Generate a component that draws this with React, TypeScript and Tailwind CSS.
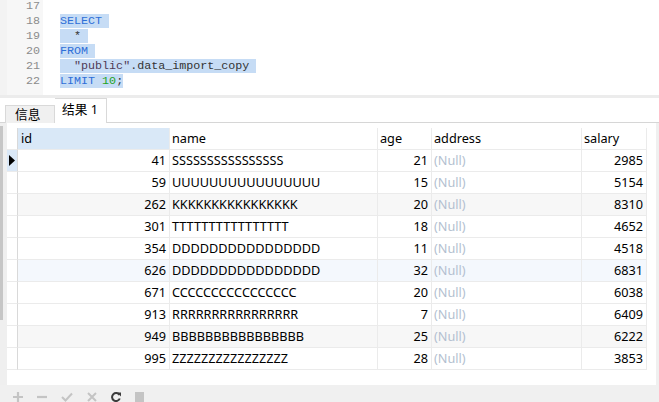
import React from 'react';

interface Row {
  id: number;
  name: string;
  age: number;
  salary: number;
}

const rows: Row[] = [
  { id: 41, name: 'SSSSSSSSSSSSSSSS', age: 21, salary: 2985 },
  { id: 59, name: 'UUUUUUUUUUUUUUUU', age: 15, salary: 5154 },
  { id: 262, name: 'KKKKKKKKKKKKKKKK', age: 20, salary: 8310 },
  { id: 301, name: 'TTTTTTTTTTTTTTTT', age: 18, salary: 4652 },
  { id: 354, name: 'DDDDDDDDDDDDDDDD', age: 11, salary: 4518 },
  { id: 626, name: 'DDDDDDDDDDDDDDDD', age: 32, salary: 6831 },
  { id: 671, name: 'CCCCCCCCCCCCCCCC', age: 20, salary: 6038 },
  { id: 913, name: 'RRRRRRRRRRRRRRRR', age: 7, salary: 6409 },
  { id: 949, name: 'BBBBBBBBBBBBBBBB', age: 25, salary: 6222 },
  { id: 995, name: 'ZZZZZZZZZZZZZZZZ', age: 28, salary: 3853 },
];

const rowBg = (i: number) => {
  if (i === 2 || i === 8) return 'bg-[#f7f7f7]';
  if (i === 5) return 'bg-[#f4f8fd]';
  return 'bg-white';
};

const cell = 'h-[22px] border-r border-b border-[#ebebeb] flex items-center';

export default function App() {
  return (
    <div className="w-[659px] h-[402px] overflow-hidden bg-[#f0f0f0] flex flex-col text-[12.7px] text-black font-['Noto_Sans','Noto_Sans_CJK_SC',sans-serif]">
      {/* SQL editor */}
      <div className="h-[95px] bg-white flex overflow-hidden">
        <div className="w-[7px] bg-[#f3f3f3]" />
        <div className="w-[36px] bg-[#f7f7f7] flex flex-col items-end pr-[3px] mt-[-1px] text-[#8c8c8c] font-['Liberation_Mono',monospace] text-[11.7px] leading-[15px]">
          {[17, 18, 19, 20, 21, 22].map((n) => (
            <span key={n}>{n}</span>
          ))}
        </div>
        <div className="pl-[17px] mt-[-1px] flex flex-col font-['Liberation_Mono',monospace] text-[11.7px] leading-[15px] whitespace-pre text-[#333]">
          <div className="h-[15px]" />
          <div className="h-[15px]"><span className="bg-[#c6dcf5] text-[#2e6fd8]">SELECT </span></div>
          <div className="h-[15px]"><span className="bg-[#c6dcf5]">{'  * '}</span></div>
          <div className="h-[15px]"><span className="bg-[#c6dcf5] text-[#2e6fd8]">FROM </span></div>
          <div className="h-[15px]">
            <span className="bg-[#c6dcf5]">
              {'  '}<span className="text-[#4f3a55]">"public"</span>.data_import_copy{' '}
            </span>
          </div>
          <div className="h-[15px]">
            <span className="bg-[#c6dcf5]">
              <span className="text-[#2e6fd8]">LIMIT </span><span className="text-[#1fa31f]">10</span>;
            </span>
          </div>
        </div>
      </div>

      <div className="h-[3px] bg-[#ececec]" />

      {/* Tabs */}
      <div className="h-[25px] bg-white flex items-end border-b border-[#d6d6d6] pl-[5px]">
        <div className="h-[18px] w-[50px] bg-[#f0f0f0] border border-b-0 border-[#d9d9d9] flex items-center pl-[9px] mb-[-1px]">
          信息
        </div>
        <div className="h-[25px] w-[52px] bg-white border border-l-0 border-b-0 border-[#d9d9d9] flex items-center pl-[7px] pb-[2px] mb-[-1px]">
          结果 1
        </div>
      </div>

      {/* Grid */}
      <div className="flex-1 flex">
        <div className="w-[7px] bg-[#efefef] pt-[3px]">
          <div className="w-[3px] h-[194px] bg-[#c6c6c6]" />
        </div>
        <div className="flex-1 bg-white pt-[5px]">
          <div className="grid grid-cols-[11px_152px_208px_54px_150px_65px]">
            <div className={`${cell} border-r-[#d9d9d9] bg-white`} />
            <div className={`${cell} bg-[#d9e8f7] pl-[3px]`}>id</div>
            <div className={`${cell} pl-[2px]`}>name</div>
            <div className={`${cell} pl-[2px]`}>age</div>
            <div className={`${cell} pl-[2px]`}>address</div>
            <div className={`${cell} pl-[2px]`}>salary</div>
            {rows.map((r, i) => (
              <React.Fragment key={r.id}>
                <div className={`${cell} border-r-[#d9d9d9] ${i === 0 ? 'bg-[#dae8f7]' : 'bg-white'} justify-center`}>
                  {i === 0 && (
                    <svg width="7" height="11" viewBox="0 0 7 11">
                      <path d="M0 0 L6 5.5 L0 11 Z" fill="#000" />
                    </svg>
                  )}
                </div>
                <div className={`${cell} ${rowBg(i)} justify-end pr-[3px]`}>{r.id}</div>
                <div className={`${cell} ${rowBg(i)} pl-[2px]`}>{r.name}</div>
                <div className={`${cell} ${rowBg(i)} justify-end pr-[3px]`}>{r.age}</div>
                <div className={`${cell} ${rowBg(i)} pl-[2px] text-[#b3bfd0]`}>(Null)</div>
                <div className={`${cell} ${rowBg(i)} justify-end pr-[3px]`}>{r.salary}</div>
              </React.Fragment>
            ))}
          </div>
        </div>
        <div className="w-[3px] bg-[#f0f0f0]" />
      </div>

      {/* Bottom toolbar */}
      <div className="h-[17px] bg-[#f0f0f0] flex items-start pt-[7px] pl-[13px] gap-[14px]">
        <svg width="10" height="10" viewBox="0 0 10 10">
          <path d="M5 0 V10 M0 5 H10" stroke="#c4c4c4" strokeWidth="2.2" />
        </svg>
        <svg width="10" height="10" viewBox="0 0 10 10">
          <path d="M0 5 H10" stroke="#c4c4c4" strokeWidth="2.2" />
        </svg>
        <svg width="12" height="10" viewBox="0 0 12 10">
          <path d="M1 5 L4.5 8.5 L11 1.5" stroke="#c4c4c4" strokeWidth="2" fill="none" />
        </svg>
        <svg width="10" height="10" viewBox="0 0 10 10">
          <path d="M1 1 L9 9 M9 1 L1 9" stroke="#c4c4c4" strokeWidth="2" />
        </svg>
        <svg width="10" height="10" viewBox="0 0 10 10">
          <path d="M8.5 3 A4 4 0 1 0 8.8 6.5" stroke="#3c3c3c" strokeWidth="2" fill="none" />
          <path d="M6 0.5 L10 0.5 L10 4.5 Z" fill="#3c3c3c" />
        </svg>
        <svg width="10" height="10" viewBox="0 0 10 10">
          <rect x="0" y="0" width="9" height="10" fill="#c4c4c4" />
        </svg>
      </div>
    </div>
  );
}
